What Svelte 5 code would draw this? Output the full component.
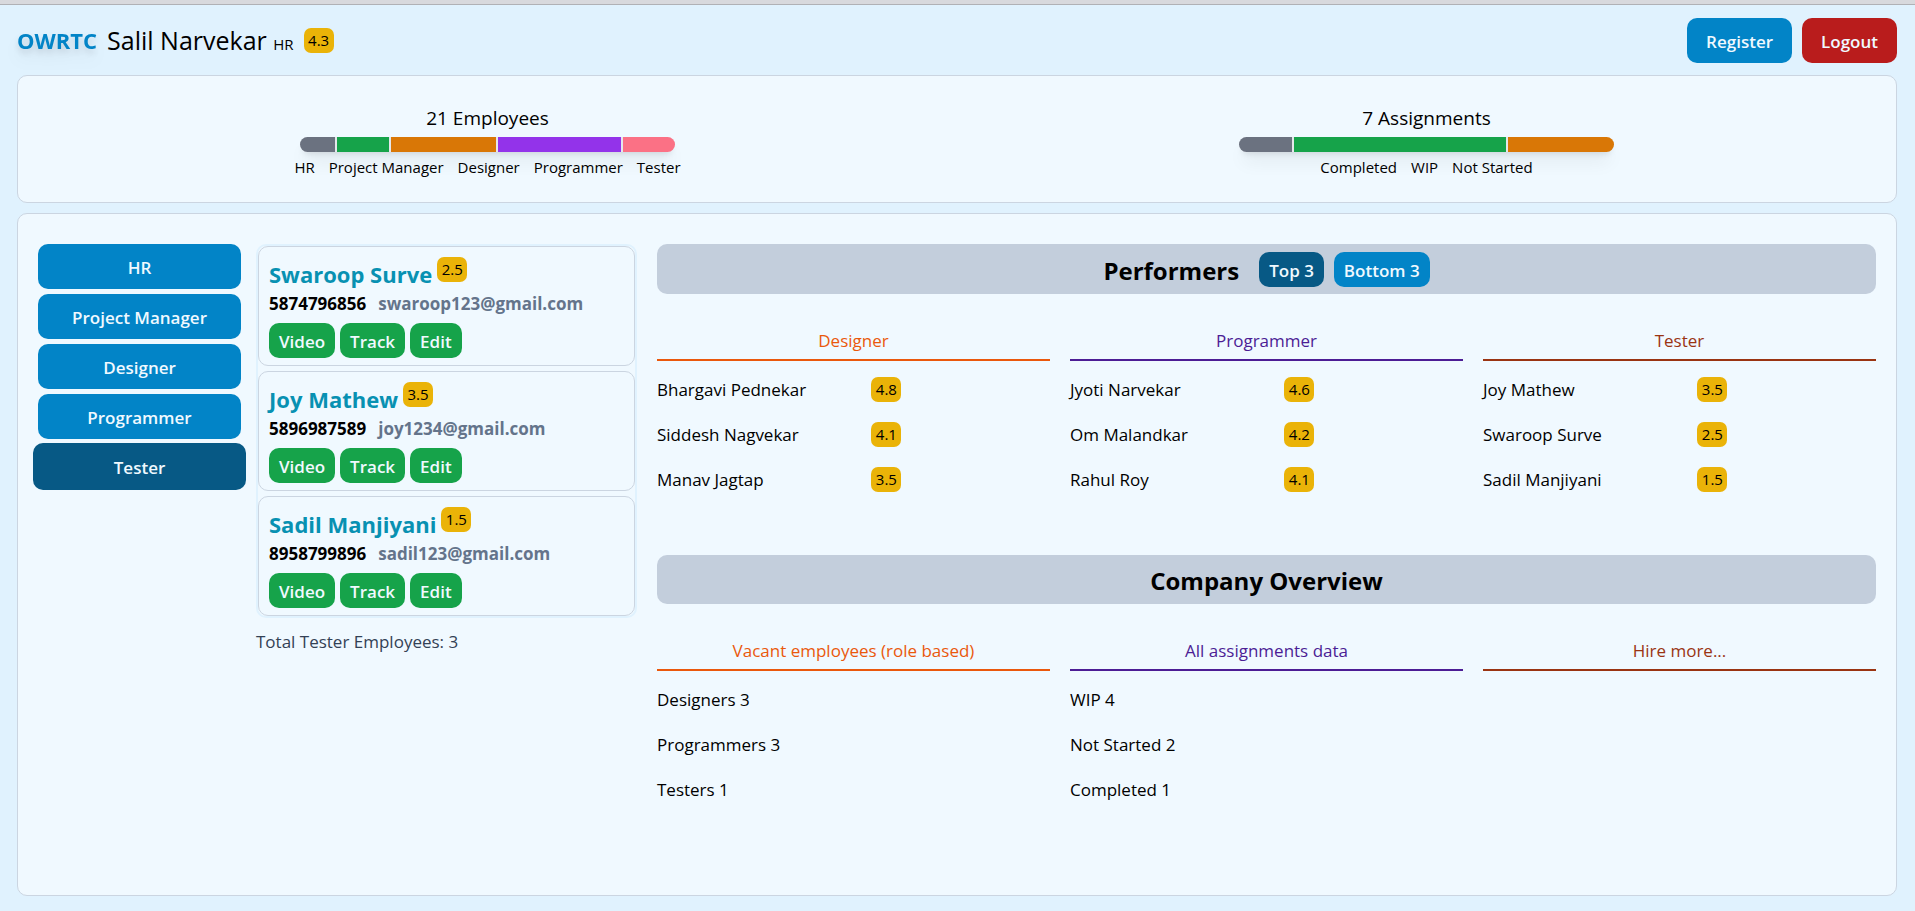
<script>
  const employeeMix = [
    { label: 'HR', count: 2, color: '#6b7280' },
    { label: 'Project Manager', count: 3, color: '#16a34a' },
    { label: 'Designer', count: 6, color: '#d97706' },
    { label: 'Programmer', count: 7, color: '#9333ea' },
    { label: 'Tester', count: 3, color: '#fb7185' }
  ];
  const assignmentMix = [
    { label: 'Completed', count: 1, color: '#6b7280' },
    { label: 'WIP', count: 4, color: '#16a34a' },
    { label: 'Not Started', count: 2, color: '#d97706' }
  ];
  const summaries = [
    { title: '21 Employees', parts: employeeMix },
    { title: '7 Assignments', parts: assignmentMix }
  ];

  const roles = ['HR', 'Project Manager', 'Designer', 'Programmer', 'Tester'];
  let activeRole = $state('Tester');
  let ranking = $state('Top 3');

  const people = [
    { name: 'Swaroop Surve', rating: '2.5', phone: '5874796856', email: 'swaroop123@gmail.com' },
    { name: 'Joy Mathew', rating: '3.5', phone: '5896987589', email: 'joy1234@gmail.com' },
    { name: 'Sadil Manjiyani', rating: '1.5', phone: '8958799896', email: 'sadil123@gmail.com' }
  ];

  const performers = [
    { title: 'Designer', tone: 'orange', rows: [['Bhargavi Pednekar', '4.8'], ['Siddesh Nagvekar', '4.1'], ['Manav Jagtap', '3.5']] },
    { title: 'Programmer', tone: 'violet', rows: [['Jyoti Narvekar', '4.6'], ['Om Malandkar', '4.2'], ['Rahul Roy', '4.1']] },
    { title: 'Tester', tone: 'rust', rows: [['Joy Mathew', '3.5'], ['Swaroop Surve', '2.5'], ['Sadil Manjiyani', '1.5']] }
  ];
  const overview = [
    { title: 'Vacant employees (role based)', tone: 'orange', rows: ['Designers 3', 'Programmers 3', 'Testers 1'] },
    { title: 'All assignments data', tone: 'violet', rows: ['WIP 4', 'Not Started 2', 'Completed 1'] },
    { title: 'Hire more...', tone: 'rust', rows: [] }
  ];
</script>

<div class="page">
  <header>
    <div class="identity">
      <span class="brand">OWRTC</span>
      <span class="user">Salil Narvekar <small>HR</small></span>
      <span class="chip">4.3</span>
    </div>
    <div class="account">
      <button class="btn large">Register</button>
      <button class="btn large danger">Logout</button>
    </div>
  </header>

  <section class="panel summary">
    {#each summaries as item}
      <div class="stat">
        <h2>{item.title}</h2>
        <div class="bar">
          {#each item.parts as part}
            <span style:flex-grow={part.count} style:background={part.color}></span>
          {/each}
        </div>
        <div class="legend">
          {#each item.parts as part}<span>{part.label}</span>{/each}
        </div>
      </div>
    {/each}
  </section>

  <main class="panel board">
    <nav>
      {#each roles as role}
        <button class="btn" class:current={role === activeRole} onclick={() => (activeRole = role)}>{role}</button>
      {/each}
    </nav>

    <section class="people">
      <div class="cards">
        {#each people as person}
          <article>
            <h3>{person.name} <span class="chip">{person.rating}</span></h3>
            <p><span>{person.phone}</span><span class="email">{person.email}</span></p>
            <div class="actions">
              <button class="btn small go">Video</button>
              <button class="btn small go">Track</button>
              <button class="btn small go">Edit</button>
            </div>
          </article>
        {/each}
      </div>
      <p class="total">Total Tester Employees: 3</p>
    </section>

    <div class="details">
      <section>
        <div class="heading">
          <h2>Performers</h2>
          <div class="switch">
            {#each ['Top 3', 'Bottom 3'] as option}
              <button class="btn small" class:chosen={option === ranking} onclick={() => (ranking = option)}>{option}</button>
            {/each}
          </div>
        </div>
        <div class="columns">
          {#each performers as group}
            <div>
              <h4 class={group.tone}>{group.title}</h4>
              <ul>
                {#each group.rows as [name, rating]}
                  <li class="rated"><span>{name}</span><span class="chip">{rating}</span></li>
                {/each}
              </ul>
            </div>
          {/each}
        </div>
      </section>

      <section>
        <div class="heading"><h2>Company Overview</h2></div>
        <div class="columns">
          {#each overview as group}
            <div>
              <h4 class={group.tone}>{group.title}</h4>
              <ul>
                {#each group.rows as row}<li>{row}</li>{/each}
              </ul>
            </div>
          {/each}
        </div>
      </section>
    </div>
  </main>
</div>

<style>
  :global(body) {
    margin: 0;
    background: #e0f2fe;
  }
  .page,
  .page * {
    box-sizing: border-box;
  }
  .page {
    display: flex;
    flex-direction: column;
    min-height: 100vh;
    padding: 0 18px 15px 17px;
    border-top: 4px solid #d8d9dd;
    box-shadow: inset 0 1px #b0b1b5;
    font-family: 'Segoe UI', 'Open Sans', 'Noto Sans', sans-serif;
    font-size: 17px;
    font-weight: 500;
    line-height: 25px;
    color: #000;
  }
  h2, h3, h4, p, ul {
    margin: 0;
    padding: 0;
    font-weight: 500;
  }
  ul {
    list-style: none;
  }

  header {
    display: flex;
    align-items: center;
    justify-content: space-between;
    padding: 14px 0 12px;
  }
  .identity,
  .account {
    display: flex;
    align-items: center;
    gap: 10px;
  }
  .brand {
    font-size: 22px;
    font-weight: 700;
    color: #0284c7;
    filter: drop-shadow(0 10px 8px rgb(0 0 0 / 0.06)) drop-shadow(0 4px 3px rgb(0 0 0 / 0.12));
  }
  .user {
    padding-top: 3px;
    font-size: 25px;
  }
  small {
    font-size: 15px;
    font-weight: 400;
  }
  .chip {
    display: inline-block;
    width: 30px;
    border-radius: 7px;
    background: #eab308;
    color: #000;
    font-size: 15px;
    font-weight: 400;
    line-height: 25px;
    text-align: center;
  }

  .btn {
    height: 45px;
    padding: 2px 10px 0;
    border: 0;
    border-radius: 10px;
    background: #0284c7;
    color: #f0f9ff;
    font: inherit;
    font-weight: 600;
    cursor: pointer;
  }
  .large {
    padding: 2px 19px 0;
  }
  .small {
    height: 35px;
  }
  .danger {
    background: #b91c1c;
  }
  .go {
    background: #16a34a;
  }
  .chosen,
  .current {
    background: #075985;
  }

  .panel {
    border: 1px solid #cbd5e1;
    border-radius: 10px;
    background: #f0f9ff;
  }
  .summary {
    display: grid;
    grid-template-columns: 1fr 1fr;
    padding: 28px 0 22px;
  }
  .stat {
    display: flex;
    flex-direction: column;
    align-items: center;
  }
  .stat h2 {
    font-size: 19px;
    line-height: 28px;
  }
  .bar {
    display: flex;
    gap: 2px;
    width: 40%;
    height: 15px;
    margin-top: 5px;
    overflow: hidden;
    border-radius: 8px;
    background: #e5e7eb;
    box-shadow: 0 12px 18px -4px rgb(0 0 0 / 0.1), 0 5px 7px -4px rgb(0 0 0 / 0.15);
  }
  .bar span {
    flex: 1 1 0;
  }
  .legend {
    display: flex;
    gap: 14px;
    margin-top: 3px;
    font-size: 15px;
    font-weight: 400;
  }

  .board {
    display: grid;
    flex: 1;
    grid-template-columns: 203fr 381fr 1224fr;
    gap: 15px;
    align-items: start;
    margin-top: 10px;
    padding: 30px 20px;
  }
  nav {
    display: flex;
    flex-direction: column;
    gap: 5px;
  }
  .current {
    height: 47px;
    margin: -1px -5px;
  }

  .cards {
    display: flex;
    flex-direction: column;
    gap: 5px;
    padding: 2px;
    border-radius: 10px;
    box-shadow: inset 0 0 0 2px #e0f2fe;
  }
  article {
    padding: 10px 10px 7px;
    border: 1px solid #cbd5e1;
    border-radius: 10px;
    background: #f0f9ff;
  }
  article h3 {
    display: flex;
    align-items: flex-start;
    gap: 5px;
    height: 34px;
    color: #0891b2;
    font-size: 22px;
    font-weight: 700;
    line-height: 34px;
  }
  article p {
    display: flex;
    gap: 12px;
    font-weight: 700;
  }
  .email {
    color: #64748b;
  }
  .actions {
    display: flex;
    gap: 5px;
    margin-top: 7px;
  }
  .total {
    margin-top: 11px;
    color: #334155;
    font-weight: 400;
  }

  .details {
    display: grid;
    gap: 50px;
    padding-left: 5px;
  }
  .heading {
    display: flex;
    align-items: center;
    justify-content: center;
    gap: 20px;
    min-height: 49px;
    border-radius: 10px;
    background: #c3cedc;
  }
  .heading h2 {
    padding-top: 2px;
    font-size: 24px;
    font-weight: 700;
  }
  .switch {
    display: flex;
    gap: 10px;
    padding: 8px 0 7px;
  }
  .columns {
    display: grid;
    grid-template-columns: repeat(3, 1fr);
    gap: 20px;
    min-height: 211px;
    padding-top: 30px;
  }
  h4 {
    padding: 4px 0 6px;
    border-bottom: 2px solid;
    font-size: 17px;
    text-align: center;
  }
  .orange {
    color: #ea580c;
  }
  .violet {
    color: #4c1d95;
  }
  .rust {
    color: #9a3412;
  }
  ul {
    padding-top: 6px;
  }
  li {
    padding: 10px 0;
  }
  .rated {
    display: grid;
    grid-template-columns: 6fr 5fr;
  }
</style>
